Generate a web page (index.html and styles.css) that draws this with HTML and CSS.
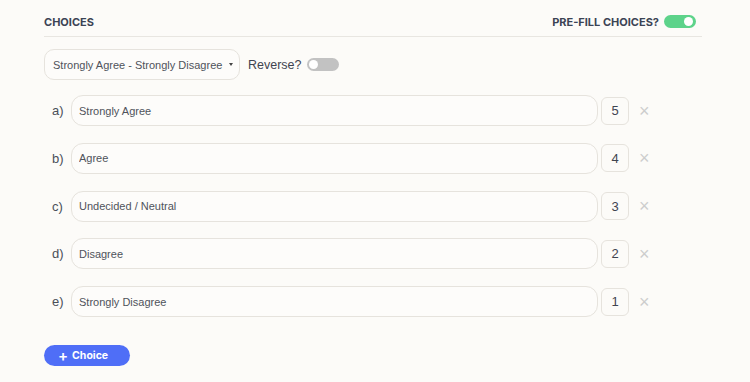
FILE: index.html
```html
<!DOCTYPE html>
<html lang="en">
<head>
  <meta charset="UTF-8" />
  <meta name="viewport" content="width=device-width, initial-scale=1.0" />
  <title>Choices</title>
  <link rel="stylesheet" href="styles.css">
</head>
<body>
  <div class="choices-panel">
    <!-- Section header -->
    <div class="choices-header">
      <h3>Choices</h3>
      <div class="prefill">
        <span>Pre-fill choices?</span>
        <span class="toggle on"></span>
      </div>
    </div>

    <!-- Scale preset + reverse switch -->
    <div class="scale-row">
      <div class="scale-select">
        <span>Strongly Agree - Strongly Disagree</span>
        <span class="caret"></span>
      </div>
      <span class="reverse-label">Reverse?</span>
      <span class="toggle"></span>
    </div>

    <!-- Choice list -->
    <div class="choice-list">
      <div class="choice">
        <span class="choice-letter">a)</span>
        <input class="choice-input" type="text" value="Strongly Agree" />
        <span class="choice-score">5</span>
        <span class="choice-remove">&times;</span>
      </div>
      <div class="choice">
        <span class="choice-letter">b)</span>
        <input class="choice-input" type="text" value="Agree" />
        <span class="choice-score">4</span>
        <span class="choice-remove">&times;</span>
      </div>
      <div class="choice">
        <span class="choice-letter">c)</span>
        <input class="choice-input" type="text" value="Undecided / Neutral" />
        <span class="choice-score">3</span>
        <span class="choice-remove">&times;</span>
      </div>
      <div class="choice">
        <span class="choice-letter">d)</span>
        <input class="choice-input" type="text" value="Disagree" />
        <span class="choice-score">2</span>
        <span class="choice-remove">&times;</span>
      </div>
      <div class="choice">
        <span class="choice-letter">e)</span>
        <input class="choice-input" type="text" value="Strongly Disagree" />
        <span class="choice-score">1</span>
        <span class="choice-remove">&times;</span>
      </div>
    </div>

    <button class="add-choice" type="button"><span class="plus">+</span> Choice</button>
  </div>
</body>
</html>
```

FILE: styles.css
```css
* {
  box-sizing: border-box;
}

body {
  margin: 0;
  background: #fcfbf8;
  font-family: "Liberation Sans", Arial, sans-serif;
  color: #3a3f4a;
}

.choices-panel {
  width: 658px;
  margin-left: 44px;
}

.choices-header {
  display: flex;
  justify-content: space-between;
  align-items: center;
  height: 37px;
  padding-top: 7px;
  border-bottom: 1px solid #e8e6e1;
}

.choices-header h3 {
  margin: 0;
  font-family: Inter, "Noto Sans", sans-serif;
  font-size: 11px;
  font-weight: 700;
  text-transform: uppercase;
  color: #3b4354;
}

.prefill {
  display: flex;
  align-items: center;
  gap: 5px;
  padding-right: 6px;
  font-family: Inter, "Noto Sans", sans-serif;
  font-size: 11px;
  font-weight: 700;
  text-transform: uppercase;
  color: #3b4354;
}

.toggle {
  position: relative;
  display: inline-block;
  width: 32px;
  height: 13px;
  border-radius: 7px;
  background: #c2c2c2;
}

.toggle::after {
  content: "";
  position: absolute;
  top: 2px;
  left: 2px;
  width: 9px;
  height: 9px;
  border-radius: 50%;
  background: #fff;
}

.toggle.on {
  background: #5dd38a;
}

.toggle.on::after {
  left: auto;
  right: 3px;
}

.scale-row {
  display: flex;
  align-items: center;
  margin-top: 12px;
}

.scale-select {
  display: flex;
  align-items: center;
  gap: 7px;
  width: 196px;
  height: 31px;
  padding: 0 8px;
  border: 1px solid #e6e3dd;
  border-radius: 10px;
  background: #fdfcfa;
  font-size: 11px;
  white-space: nowrap;
  color: #4f535b;
}

.caret {
  width: 0;
  height: 0;
  border-left: 2.5px solid transparent;
  border-right: 2.5px solid transparent;
  border-top: 3px solid #444;
}

.reverse-label {
  margin-left: 8px;
  margin-right: 5px;
  font-size: 12.5px;
  color: #3f4450;
}

.choice-list {
  display: flex;
  flex-direction: column;
  gap: 16.75px;
  margin-top: 15px;
}

.choice {
  display: flex;
  align-items: center;
  height: 31px;
}

.choice-letter {
  width: 27px;
  padding-left: 8px;
  font-size: 13px;
  color: #4a4f58;
}

.choice-input {
  width: 527px;
  height: 31px;
  padding: 0 7px;
  border: 1px solid #e6e3dd;
  border-radius: 12px;
  background: #fdfcfa;
  font-family: inherit;
  font-size: 11px;
  color: #4f535b;
  outline: none;
}

.choice-score {
  display: flex;
  align-items: center;
  justify-content: center;
  width: 28px;
  height: 28px;
  margin-left: 3px;
  border: 1px solid #e6e3dd;
  border-radius: 6px;
  font-size: 13px;
  color: #3f4450;
}

.choice-remove {
  margin-left: 10px;
  font-size: 18px;
  line-height: 1;
  color: #cdcdcd;
}

.add-choice {
  display: flex;
  align-items: center;
  gap: 4px;
  margin-top: 28px;
  height: 21px;
  width: 86px;
  padding: 0 0 0 14px;
  border: none;
  border-radius: 11px;
  background: #4f6ef7;
  color: #fff;
  font-family: Inter, "Noto Sans", sans-serif;
  font-size: 10.5px;
  font-weight: 700;
}

.add-choice .plus {
  font-size: 15px;
  font-weight: 600;
  line-height: 1;
}
```
